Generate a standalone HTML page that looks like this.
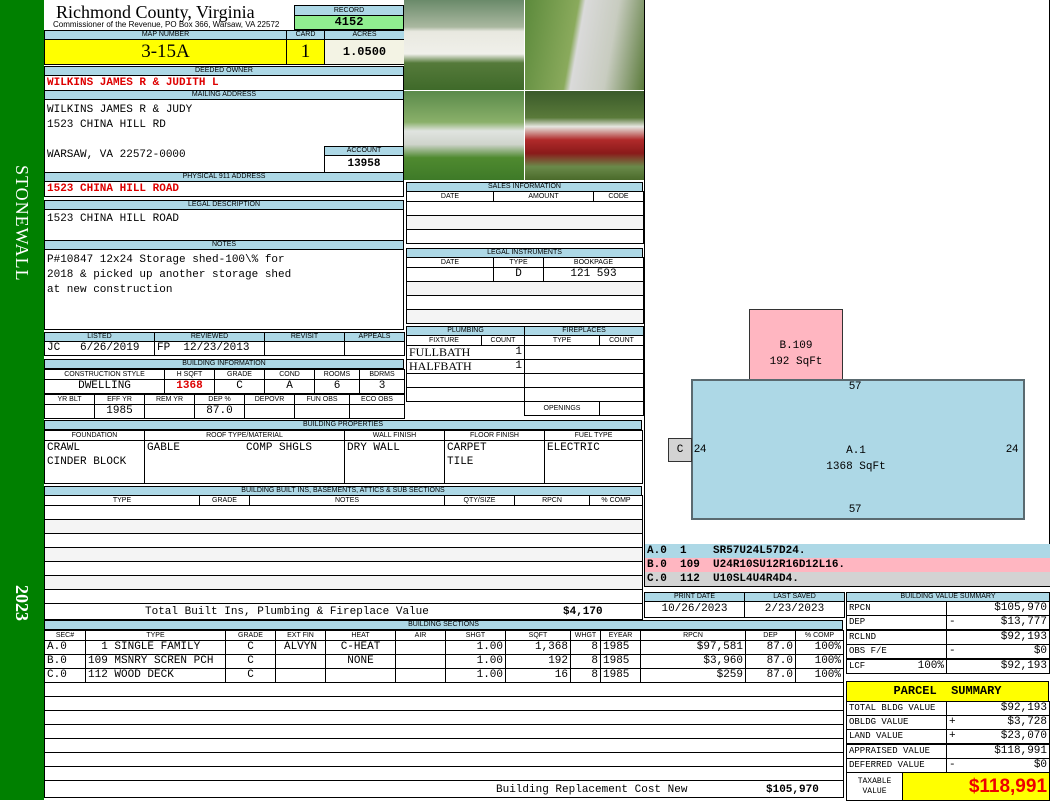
<!DOCTYPE html>
<html><head><meta charset="utf-8"><style>
*{margin:0;padding:0}
body{width:1050px;height:800px;background:#fff;position:relative;overflow:hidden;font-family:"Liberation Sans",sans-serif}
.a{position:absolute;box-sizing:border-box}
.h{background:#add8e6;border:1px solid #000;font:7px "Liberation Sans",sans-serif;text-align:center;line-height:8px;color:#000}
.b{border:1px solid #000;background:#fff}
.m{font-family:"Liberation Mono",monospace;font-size:11px;color:#000}
.r{color:#d00;font-weight:bold}
table{border-collapse:collapse;table-layout:fixed;position:absolute}
td{border:1px solid #000;padding:0 2px;overflow:hidden;white-space:nowrap}
.th td{background:#add8e6;font:7px "Liberation Sans",sans-serif;text-align:center;height:8px;line-height:8px}
.sh td{background:#fff;font:7px "Liberation Sans",sans-serif;text-align:center;height:9px;line-height:9px}
.v td{font-family:"Liberation Mono",monospace;font-size:11px;height:13px;line-height:13px}
.c{text-align:center}.rt{text-align:right}
</style></head><body>
<div class="a" style="left:0;top:0;width:44px;height:800px;background:#008000"></div>
<div class="a" style="left:12px;top:165px;width:20px;height:150px;color:#fff;font:18px 'Liberation Serif',serif;writing-mode:vertical-rl;letter-spacing:1px">STONEWALL</div>
<div class="a" style="left:12px;top:585px;width:20px;height:40px;color:#fff;font:bold 18px 'Liberation Serif',serif;writing-mode:vertical-rl">2023</div>

<div class="a" style="left:56px;top:2px;font:18px 'Liberation Serif',serif">Richmond County, Virginia</div>
<div class="a" style="left:53px;top:20px;font:8px 'Liberation Sans',sans-serif">Commissioner of the Revenue, PO Box 366, Warsaw, VA 22572</div>
<div class="a h" style="left:294px;top:5px;width:110px;height:11px;line-height:9px">RECORD</div>
<div class="a" style="left:294px;top:15px;width:110px;height:15px;background:#90ee90;border:1px solid #000;text-align:center;font:bold 12px 'Liberation Mono',monospace;line-height:13px">4152</div>

<table style="left:44px;top:30px;width:360px"><colgroup><col style="width:242px"><col style="width:38px"><col style="width:80px"></colgroup>
<tr class="th"><td>MAP NUMBER</td><td>CARD</td><td>ACRES</td></tr>
<tr><td style="background:#ff0;text-align:center;font:19px 'Liberation Serif',serif;height:24px">3-15A</td><td style="background:#ff0;text-align:center;font:19px 'Liberation Serif',serif">1</td><td style="background:#f3f3e4;text-align:center;font:bold 12px 'Liberation Mono',monospace">1.0500</td></tr></table>

<div class="a h" style="left:44px;top:66px;width:360px;height:10px">DEEDED OWNER</div>
<div class="a b m r" style="left:44px;top:75px;width:360px;height:16px;line-height:15px;padding-left:2px;color:#d00">WILKINS JAMES R &amp; JUDITH L</div>
<div class="a h" style="left:44px;top:90px;width:360px;height:10px">MAILING ADDRESS</div>
<div class="a b m" style="left:44px;top:99px;width:360px;height:74px;padding:3px 2px;line-height:15px">WILKINS JAMES R &amp; JUDY<br>1523 CHINA HILL RD<br><br>WARSAW, VA 22572-0000</div>
<div class="a h" style="left:324px;top:146px;width:80px;height:10px">ACCOUNT</div>
<div class="a b m" style="left:324px;top:155px;width:80px;height:18px;text-align:center;font-weight:bold;line-height:16px">13958</div>
<div class="a h" style="left:44px;top:172px;width:360px;height:10px">PHYSICAL 911 ADDRESS</div>
<div class="a b m r" style="left:44px;top:181px;width:360px;height:16px;line-height:15px;padding-left:2px;color:#d00">1523 CHINA HILL ROAD</div>

<div class="a h" style="left:44px;top:200px;width:360px;height:10px">LEGAL DESCRIPTION</div>
<div class="a b m" style="left:44px;top:209px;width:360px;height:32px;padding:3px 2px">1523 CHINA HILL ROAD</div>
<div class="a h" style="left:44px;top:240px;width:360px;height:10px">NOTES</div>
<div class="a b m" style="left:44px;top:249px;width:360px;height:81px;padding:3px 2px;line-height:15px">P#10847 12x24 Storage shed-100\% for<br>2018 &amp; picked up another storage shed<br>at new construction</div>

<table style="left:44px;top:332px;width:360px"><colgroup><col style="width:110px"><col style="width:110px"><col style="width:80px"><col style="width:60px"></colgroup>
<tr class="th"><td>LISTED</td><td>REVIEWED</td><td>REVISIT</td><td>APPEALS</td></tr>
<tr class="v"><td>JC&nbsp;&nbsp;&nbsp;6/26/2019</td><td>FP&nbsp;&nbsp;12/23/2013</td><td></td><td></td></tr></table>

<div class="a h" style="left:44px;top:359px;width:360px;height:10px">BUILDING INFORMATION</div>
<table style="left:44px;top:369px;width:360px"><colgroup><col style="width:120px"><col style="width:50px"><col style="width:50px"><col style="width:50px"><col style="width:45px"><col style="width:45px"></colgroup>
<tr class="sh"><td>CONSTRUCTION STYLE</td><td>H SQFT</td><td>GRADE</td><td>COND</td><td>ROOMS</td><td>BDRMS</td></tr>
<tr class="v c"><td class="c">DWELLING</td><td class="c r">1368</td><td class="c">C</td><td class="c">A</td><td class="c">6</td><td class="c">3</td></tr></table>
<table style="left:44px;top:394px;width:360px"><colgroup><col style="width:50px"><col style="width:50px"><col style="width:50px"><col style="width:50px"><col style="width:50px"><col style="width:55px"><col style="width:55px"></colgroup>
<tr class="sh"><td>YR BLT</td><td>EFF YR</td><td>REM YR</td><td>DEP %</td><td>DEPOVR</td><td>FUN OBS</td><td>ECO OBS</td></tr>
<tr class="v"><td></td><td class="c">1985</td><td></td><td class="c">87.0</td><td></td><td></td><td></td></tr></table>

<div class="a h" style="left:44px;top:420px;width:598px;height:10px">BUILDING PROPERTIES</div>
<table style="left:44px;top:430px;width:598px"><colgroup><col style="width:100px"><col style="width:200px"><col style="width:100px"><col style="width:100px"><col style="width:98px"></colgroup>
<tr class="sh"><td>FOUNDATION</td><td>ROOF TYPE/MATERIAL</td><td>WALL FINISH</td><td>FLOOR FINISH</td><td>FUEL TYPE</td></tr>
<tr class="v"><td style="height:42px;vertical-align:top;line-height:14px">CRAWL<br>CINDER BLOCK</td><td style="vertical-align:top;line-height:14px">GABLE&nbsp;&nbsp;&nbsp;&nbsp;&nbsp;&nbsp;&nbsp;&nbsp;&nbsp;&nbsp;COMP SHGLS</td><td style="vertical-align:top;line-height:14px">DRY WALL</td><td style="vertical-align:top;line-height:14px">CARPET<br>TILE</td><td style="vertical-align:top;line-height:14px">ELECTRIC</td></tr></table>

<div class="a h" style="left:44px;top:486px;width:598px;height:10px">BUILDING BUILT INS, BASEMENTS, ATTICS &amp; SUB SECTIONS</div>
<table style="left:44px;top:495px;width:598px"><colgroup><col style="width:155px"><col style="width:50px"><col style="width:195px"><col style="width:70px"><col style="width:75px"><col style="width:53px"></colgroup>
<tr class="sh"><td>TYPE</td><td>GRADE</td><td>NOTES</td><td>QTY/SIZE</td><td>RPCN</td><td>% COMP</td></tr>
<tr class="v"><td colspan="6"></td></tr><tr class="v"><td colspan="6" style="background:#f4f4f4"></td></tr><tr class="v"><td colspan="6"></td></tr><tr class="v"><td colspan="6" style="background:#f4f4f4"></td></tr><tr class="v"><td colspan="6"></td></tr><tr class="v"><td colspan="6" style="background:#f4f4f4"></td></tr><tr class="v"><td colspan="6"></td></tr>
<tr class="v"><td colspan="6" style="height:15px;position:relative"><span style="position:absolute;left:100px;top:2px">Total Built Ins, Plumbing &amp; Fireplace Value</span><span style="position:absolute;left:518px;top:2px;font-weight:bold">$4,170</span></td></tr></table>

<div class="a h" style="left:44px;top:620px;width:799px;height:10px">BUILDING SECTIONS</div>
<table style="left:44px;top:630px;width:799px"><colgroup><col style="width:41px"><col style="width:140px"><col style="width:50px"><col style="width:50px"><col style="width:70px"><col style="width:50px"><col style="width:60px"><col style="width:65px"><col style="width:30px"><col style="width:40px"><col style="width:105px"><col style="width:50px"><col style="width:48px"></colgroup>
<tr class="sh"><td>SEC#</td><td>TYPE</td><td>GRADE</td><td>EXT FIN</td><td>HEAT</td><td>AIR</td><td>SHGT</td><td>SQFT</td><td>WHGT</td><td>EYEAR</td><td>RPCN</td><td>DEP</td><td>% COMP</td></tr>
<tr class="v"><td>A.0</td><td>&nbsp;&nbsp;1 SINGLE FAMILY</td><td class="c">C</td><td class="c">ALVYN</td><td class="c">C-HEAT</td><td></td><td class="rt">1.00</td><td class="rt">1,368</td><td class="rt">8</td><td>1985</td><td class="rt">$97,581</td><td class="rt">87.0</td><td class="rt">100%</td></tr>
<tr class="v"><td>B.0</td><td>109 MSNRY SCREN PCH</td><td class="c">C</td><td></td><td class="c">NONE</td><td></td><td class="rt">1.00</td><td class="rt">192</td><td class="rt">8</td><td>1985</td><td class="rt">$3,960</td><td class="rt">87.0</td><td class="rt">100%</td></tr>
<tr class="v"><td>C.0</td><td>112 WOOD DECK</td><td class="c">C</td><td></td><td></td><td></td><td class="rt">1.00</td><td class="rt">16</td><td class="rt">8</td><td>1985</td><td class="rt">$259</td><td class="rt">87.0</td><td class="rt">100%</td></tr>
<tr class="v"><td colspan="13"></td></tr><tr class="v"><td colspan="13"></td></tr><tr class="v"><td colspan="13"></td></tr><tr class="v"><td colspan="13"></td></tr><tr class="v"><td colspan="13"></td></tr><tr class="v"><td colspan="13"></td></tr><tr class="v"><td colspan="13"></td></tr>
<tr class="v"><td colspan="13" style="height:16px;position:relative"><span style="position:absolute;left:451px;top:3px">Building Replacement Cost New</span><span style="position:absolute;left:721px;top:3px;font-weight:bold">$105,970</span></td></tr></table>

<!-- photos -->
<div class="a" style="left:404px;top:0;width:120px;height:90px;background:linear-gradient(#6a8a6a 0,#aab8a0 30%,#e8e8e0 35%,#f0f0ea 60%,#557a3a 70%,#3f6a2a 100%)"></div>
<div class="a" style="left:525px;top:0;width:119px;height:90px;background:linear-gradient(100deg,#5c8a3c,#8aaa5c 40%,#dadada 45%,#c8ccc0 70%,#5a7a3a)"></div>
<div class="a" style="left:404px;top:91px;width:120px;height:89px;background:linear-gradient(#5a8a4a,#8ab06a 35%,#e0e4e0 45%,#cfd4cc 60%,#4f8a2f 75%,#3e7a28)"></div>
<div class="a" style="left:525px;top:91px;width:119px;height:89px;background:linear-gradient(#3a5a2a,#5a7a3a 30%,#e6e6e0 40%,#b02a2a 55%,#8a1a1a 70%,#6a8a4a 85%,#4a6a2a)"></div>

<!-- right middle -->
<div class="a h" style="left:406px;top:182px;width:237px;height:10px">SALES INFORMATION</div>
<table style="left:406px;top:191px;width:237px"><colgroup><col style="width:87px"><col style="width:100px"><col style="width:50px"></colgroup>
<tr class="sh"><td>DATE</td><td>AMOUNT</td><td>CODE</td></tr>
<tr class="v"><td colspan="3"></td></tr><tr class="v"><td colspan="3" style="background:#f4f4f4"></td></tr><tr class="v"><td colspan="3"></td></tr></table>
<div class="a h" style="left:406px;top:248px;width:237px;height:10px">LEGAL INSTRUMENTS</div>
<table style="left:406px;top:257px;width:237px"><colgroup><col style="width:87px"><col style="width:50px"><col style="width:100px"></colgroup>
<tr class="sh"><td>DATE</td><td>TYPE</td><td>BOOKPAGE</td></tr>
<tr class="v"><td></td><td class="c">D</td><td class="c">121 593</td></tr><tr class="v"><td colspan="3" style="background:#f4f4f4"></td></tr><tr class="v"><td colspan="3"></td></tr><tr class="v"><td colspan="3" style="background:#f4f4f4"></td></tr></table>
<table style="left:406px;top:326px;width:237px"><colgroup><col style="width:75px"><col style="width:43px"><col style="width:75px"><col style="width:44px"></colgroup>
<tr class="th"><td colspan="2">PLUMBING</td><td colspan="2">FIREPLACES</td></tr>
<tr class="sh"><td>FIXTURE</td><td>COUNT</td><td>TYPE</td><td>COUNT</td></tr>
<tr class="v"><td style="font-family:'Liberation Serif',serif;font-size:12px;border-right:0">FULLBATH</td><td class="rt" style="border-left:0">1</td><td colspan="2"></td></tr>
<tr class="v"><td style="font-family:'Liberation Serif',serif;font-size:12px;border-right:0">HALFBATH</td><td class="rt" style="border-left:0">1</td><td colspan="2"></td></tr>
<tr class="v"><td colspan="2"></td><td colspan="2"></td></tr>
<tr class="v"><td colspan="2"></td><td colspan="2"></td></tr>
<tr class="v"><td colspan="2" style="border:0"></td><td style="font:7px 'Liberation Sans',sans-serif;text-align:center">OPENINGS</td><td></td></tr></table>

<!-- sketch -->
<div class="a" style="left:644px;top:0;width:406px;height:545px;border:1px solid #000;border-top:0;background:#fff"></div>
<div class="a" style="left:749px;top:309px;width:94px;height:72px;background:#ffb6c1;border:1px solid #333;text-align:center;font:11px 'Liberation Mono',monospace;padding-top:28px;line-height:16px">B.109<br>192 SqFt</div>
<div class="a" style="left:691px;top:379px;width:334px;height:141px;background:#add8e6;border:2px solid #5a6a70"></div>
<div class="a" style="left:668px;top:438px;width:24px;height:24px;background:#d3d3d3;border:1px solid #333;font:11px 'Liberation Mono',monospace;text-align:center;line-height:22px">C</div>
<div class="a" style="left:849px;top:380px;font:11px 'Liberation Sans',sans-serif">57</div>
<div class="a" style="left:849px;top:503px;font:11px 'Liberation Sans',sans-serif">57</div>
<div class="a" style="left:694px;top:443px;font:11px 'Liberation Sans',sans-serif">24</div>
<div class="a" style="left:1006px;top:443px;font:11px 'Liberation Sans',sans-serif">24</div>
<div class="a" style="left:791px;top:443px;width:130px;text-align:center;font:11px 'Liberation Mono',monospace;line-height:16px">A.1<br>1368 SqFt</div>

<div class="a m" style="left:644px;top:544px;width:406px;height:14px;background:#add8e6;border-left:1px solid #000;font-weight:bold;line-height:14px;padding-left:2px;white-space:pre">A.0  1    SR57U24L57D24.</div>
<div class="a m" style="left:644px;top:558px;width:406px;height:14px;background:#ffb6c1;border-left:1px solid #000;font-weight:bold;line-height:14px;padding-left:2px;white-space:pre">B.0  109  U24R10SU12R16D12L16.</div>
<div class="a m" style="left:644px;top:572px;width:406px;height:15px;background:#d3d3d3;border-left:1px solid #000;border-bottom:1px solid #000;font-weight:bold;line-height:14px;padding-left:2px;white-space:pre">C.0  112  U10SL4U4R4D4.</div>

<table style="left:644px;top:592px;width:200px"><colgroup><col style="width:100px"><col style="width:100px"></colgroup>
<tr class="th"><td>PRINT DATE</td><td>LAST SAVED</td></tr>
<tr class="v"><td class="c" style="height:15px">10/26/2023</td><td class="c">2/23/2023</td></tr></table>

<table style="left:846px;top:592px;width:203px"><colgroup><col style="width:100px"><col style="width:103px"></colgroup>
<tr class="th"><td colspan="2">BUILDING VALUE SUMMARY</td></tr>
<tr class="v"><td style="font-size:9px">RPCN</td><td class="rt">$105,970</td></tr>
<tr class="v"><td style="font-size:9px">DEP</td><td class="rt"><span style="float:left">-</span>$13,777</td></tr>
<tr class="v"><td style="font-size:9px;border-top:2px solid #000">RCLND</td><td class="rt" style="border-top:2px solid #000">$92,193</td></tr>
<tr class="v"><td style="font-size:9px">OBS F/E</td><td class="rt"><span style="float:left">-</span>$0</td></tr>
<tr class="v"><td style="font-size:9px;border-top:2px solid #000">LCF<span style="float:right;font-size:11px">100%</span></td><td class="rt" style="border-top:2px solid #000">$92,193</td></tr></table>

<div class="a" style="left:846px;top:681px;width:203px;height:21px;background:#ff0;border:1px solid #000;text-align:center;font:bold 12px 'Liberation Mono',monospace;line-height:19px">PARCEL&nbsp;&nbsp;SUMMARY</div>
<table style="left:846px;top:701px;width:203px"><colgroup><col style="width:56px"><col style="width:44px"><col style="width:103px"></colgroup>
<tr class="v"><td colspan="2" style="font-size:9px">TOTAL BLDG VALUE</td><td class="rt">$92,193</td></tr>
<tr class="v"><td colspan="2" style="font-size:9px">OBLDG VALUE</td><td class="rt"><span style="float:left">+</span>$3,728</td></tr>
<tr class="v"><td colspan="2" style="font-size:9px">LAND VALUE</td><td class="rt"><span style="float:left">+</span>$23,070</td></tr>
<tr class="v"><td colspan="2" style="font-size:9px;border-top:2px solid #000">APPRAISED VALUE</td><td class="rt" style="border-top:2px solid #000">$118,991</td></tr>
<tr class="v"><td colspan="2" style="font-size:9px">DEFERRED VALUE</td><td class="rt"><span style="float:left">-</span>$0</td></tr>
<tr><td class="c" style="font:8px 'Liberation Mono',monospace;height:27px;line-height:10px">TAXABLE<br>VALUE</td><td colspan="2" class="rt" style="background:#ff0;color:#e00;font:bold 19px 'Liberation Sans',sans-serif">$118,991</td></tr></table>
</body></html>
